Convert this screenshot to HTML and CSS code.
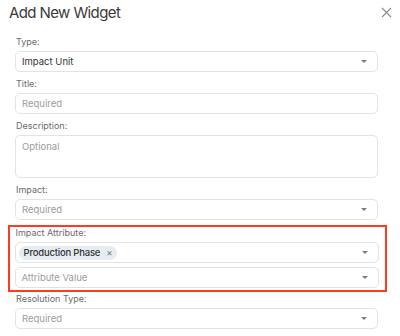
FILE: index.html
```html
<!DOCTYPE html>
<html lang="en">
<head>
  <meta charset="UTF-8" />
  <meta name="viewport" content="width=device-width, initial-scale=1.0" />
  <title>Add New Widget</title>
  <link rel="stylesheet" href="styles.css">
</head>
<body>
  <div class="modal">
    <div class="modal-header">
      <h1>Add New Widget</h1>
      <button class="close" aria-label="Close">
        <svg width="11" height="11" viewBox="0 0 11 11"><path d="M1 1 L10 10 M10 1 L1 10" stroke="#8a8a8a" stroke-width="1.1" fill="none"/></svg>
      </button>
    </div>

    <div class="form">
      <div class="field">
        <label>Type:</label>
        <div class="input select">
          <span class="value">Impact Unit</span>
          <span class="caret"></span>
        </div>
      </div>

      <div class="field">
        <label>Title:</label>
        <div class="input">
          <span class="placeholder">Required</span>
        </div>
      </div>

      <div class="field">
        <label>Description:</label>
        <div class="input textarea">
          <span class="placeholder">Optional</span>
        </div>
      </div>

      <div class="field">
        <label>Impact:</label>
        <div class="input select">
          <span class="placeholder">Required</span>
          <span class="caret"></span>
        </div>
      </div>

      <div class="field highlight">
        <label>Impact Attribute:</label>
        <div class="input select">
          <span class="chip">Production Phase <span class="chip-x">&times;</span></span>
          <span class="caret"></span>
        </div>
        <div class="input select second">
          <span class="placeholder">Attribute Value</span>
          <span class="caret"></span>
        </div>
      </div>

      <div class="field">
        <label>Resolution Type:</label>
        <div class="input select">
          <span class="placeholder">Required</span>
          <span class="caret"></span>
        </div>
      </div>
    </div>
  </div>
</body>
</html>
```

FILE: styles.css
```css
* {
  margin: 0;
  padding: 0;
  box-sizing: border-box;
  font-family: 'Inter', sans-serif;
}

body {
  background: #ffffff;
  width: 400px;
  height: 336px;
  overflow: hidden;
}

.modal-header {
  display: flex;
  justify-content: space-between;
  align-items: center;
  height: 24px;
  padding: 0 8px 0 9px;
}

.modal-header h1 {
  font-size: 15px;
  font-weight: 400;
  color: #3a3a3a;
  letter-spacing: -0.6px;
}

.close {
  border: none;
  background: none;
  display: flex;
  cursor: pointer;
}

.form {
  display: flex;
  flex-direction: column;
  padding: 12px 22px 0 15px;
}

.field {
  margin-bottom: 6px;
}

.field label {
  display: block;
  font-size: 9px;
  line-height: 12px;
  color: #6b6b6b;
  margin-bottom: 3px;
  padding-left: 1px;
}

.input {
  display: flex;
  align-items: center;
  height: 21px;
  border: 1px solid #e3e3e3;
  border-radius: 5px;
  padding: 0 10px 0 6px;
  font-size: 9.5px;
}

.input .value {
  color: #333333;
}

.placeholder {
  color: #9c9c9c;
}

.select {
  justify-content: space-between;
}

.caret {
  width: 0;
  height: 0;
  border-left: 3px solid transparent;
  border-right: 3px solid transparent;
  border-top: 3px solid #7d7d7d;
}

.textarea {
  height: 43px;
  align-items: flex-start;
  padding-top: 5px;
}

.highlight {
  border: 2.5px solid #ff3a1f;
  margin: -1px -9px 1px -7.5px;
  padding: 0 6.5px 2px 5px;
}

.highlight .second {
  margin-top: 4px;
}

.chip {
  display: inline-flex;
  align-items: center;
  height: 14px;
  padding: 0 5px;
  margin-left: -3px;
  background: #e6edf2;
  border-radius: 7px;
  color: #333333;
  font-weight: 500;
  font-size: 9.5px;
  letter-spacing: -0.2px;
}

.chip-x {
  color: #777777;
  margin-left: 6px;
  font-weight: 400;
}
```
